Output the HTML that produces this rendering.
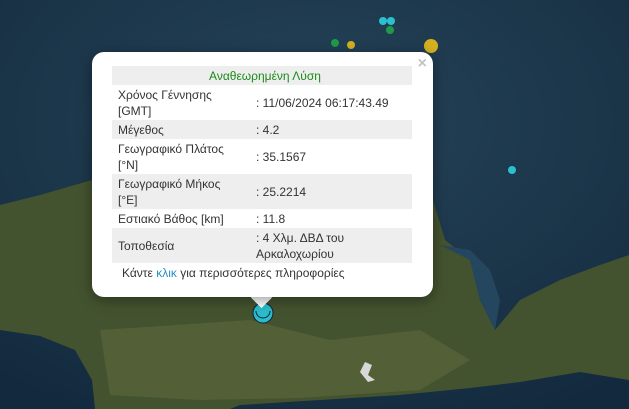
<!DOCTYPE html>
<html><head><meta charset="utf-8"><style>
html,body{margin:0;padding:0;width:629px;height:409px;overflow:hidden;background:#1d3a50;font-family:"Liberation Sans",Arial,sans-serif}
#map{position:absolute;left:0;top:0}
.pop{position:absolute;left:92px;top:52px;width:341px;height:245px;background:#fff;border-radius:12px;box-shadow:0 3px 14px rgba(0,0,0,.4)}
.tip{position:absolute;left:254px;top:290px;width:15px;height:15px;background:#fff;transform:rotate(45deg)}
.x{position:absolute;right:6px;top:3px;color:#c3c3c3;font-size:16px;font-weight:bold}
table{position:absolute;left:20px;top:14px;width:300px;border-collapse:collapse;font-size:12px;color:#333;line-height:16px}
td{padding:1.5px 0 1.5px 6px;vertical-align:middle}
tr.s td{background:#eeeeee}
td.v{padding-left:0}
.h{text-align:center;color:#1a8a1a}
.f{position:absolute;left:30px;top:214px;font-size:12px;color:#333}
.f span{color:#2a8fc4}
</style></head><body>
<svg id="map" width="629" height="409">
<defs><radialGradient id="sea" cx="50%" cy="30%" r="80%"><stop offset="0" stop-color="#264459"/><stop offset="1" stop-color="#132a3e"/></radialGradient></defs>
<rect width="629" height="409" fill="url(#sea)"/>
<path d="M0 205 L40 195 L92 180 L433 200 L445 240 L470 260 L480 300 L495 330 L520 300 L560 280 L600 265 L629 255 L629 380 L580 372 L520 382 L470 388 L400 395 L320 400 L240 405 L230 409 L95 409 L92 380 L75 350 L40 336 L0 330 Z" fill="#44532f"/>
<path d="M100 330 L250 320 L330 340 L420 330 L470 360 L420 390 L300 398 L200 400 L110 395 Z" fill="#56633a" opacity=".8"/>
<path d="M440 245 L470 260 L480 300 L495 330 L500 300 L490 270 L470 250 Z" fill="#24465e"/>
<path d="M360 372 L365 362 L372 365 L368 375 L375 380 L368 382 Z" fill="#d8d8d8"/>
<circle cx="383" cy="21" r="4" fill="#2bc0d0"/><circle cx="391" cy="21" r="4" fill="#2bc0d0"/>
<circle cx="390" cy="30" r="4" fill="#1f9a4a"/><circle cx="335" cy="43" r="4" fill="#1f9a4a"/>
<circle cx="351" cy="45" r="4" fill="#d4b020"/><circle cx="431" cy="46" r="7" fill="#d4b020"/>
<circle cx="512" cy="170" r="4" fill="#2bc0d0"/>
<circle cx="263" cy="313" r="10" fill="#2bbccc" stroke="#123" stroke-width="1"/>
<path d="M256 311 A7 7 0 0 0 270 311" fill="none" stroke="#123" stroke-width="1"/>
</svg>
<div class="tip"></div>
<div class="pop"><div class="x">×</div>
<table>
<tr class="s"><td colspan="2" class="h">Αναθεωρημένη Λύση</td></tr>
<tr><td style="width:138px">Χρόνος Γέννησης<br>[GMT]</td><td class="v">: 11/06/2024 06:17:43.49</td></tr>
<tr class="s"><td>Μέγεθος</td><td class="v">: 4.2</td></tr>
<tr><td>Γεωγραφικό Πλάτος<br>[°N]</td><td class="v">: 35.1567</td></tr>
<tr class="s"><td>Γεωγραφικό Μήκος<br>[°E]</td><td class="v">: 25.2214</td></tr>
<tr><td>Εστιακό Βάθος [km]</td><td class="v">: 11.8</td></tr>
<tr class="s"><td>Τοποθεσία</td><td class="v">: 4 Χλμ. ΔΒΔ του<br>Αρκαλοχωρίου</td></tr>
</table>
<div class="f">Κάντε <span>κλικ</span> για περισσότερες πληροφορίες</div>
</div>
</body></html>
